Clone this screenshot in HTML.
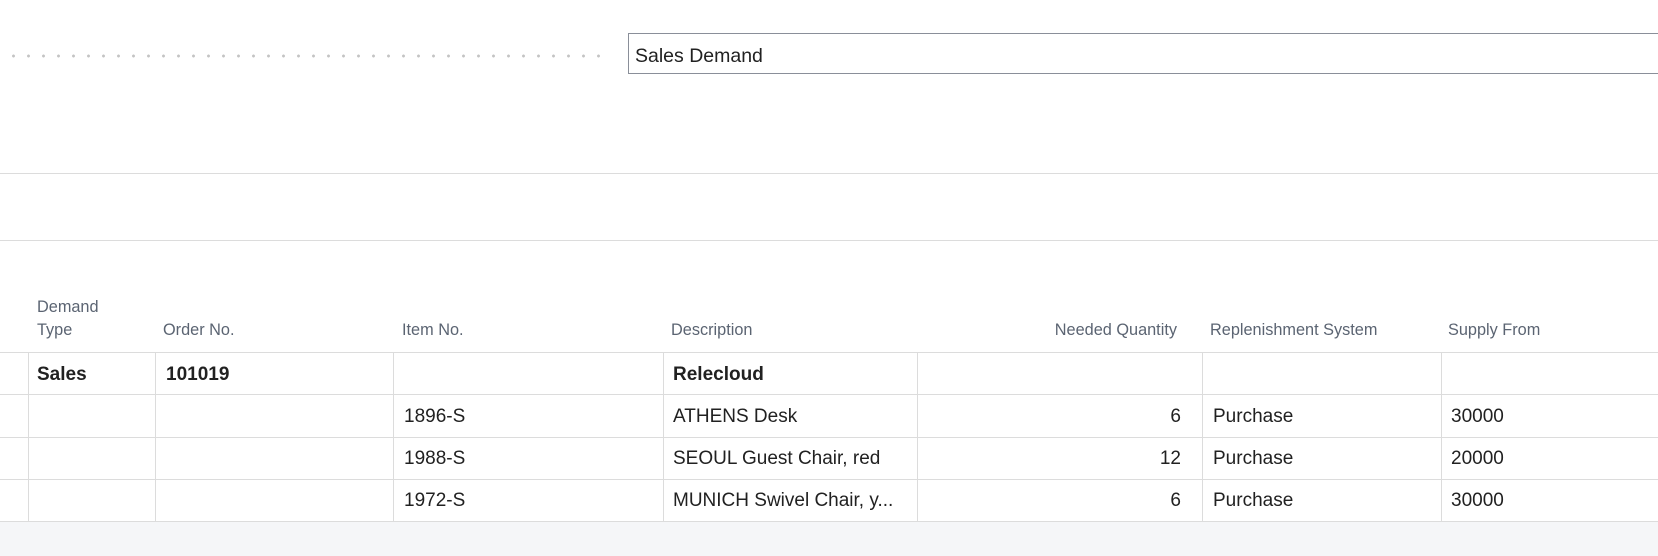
<!DOCTYPE html>
<html><head><meta charset="utf-8"><style>
body{margin:0;width:1658px;height:556px;background:#fff;position:relative;overflow:hidden;font-family:"Liberation Sans",sans-serif;color:#212121}
.abs{position:absolute}
.dots{left:6px;top:54px;width:604px;height:4px;background-image:radial-gradient(circle,#c4c4c4 1.3px,transparent 1.6px);background-size:15px 4px}
.inp{left:628px;top:33px;width:1040px;height:41px;border:1px solid #8a8f99;box-sizing:border-box;font-size:19.5px;line-height:39px;padding-left:6px;padding-top:3px}
.hl{left:0;width:1658px;height:1px;background:#dcdcdc}
.hd{font-size:16.3px;color:#5b6472;line-height:23px}
.vl{width:1px;background:#dcdcdc;top:353px;height:169px}
.t{font-size:19px;line-height:20px}
.b{font-weight:bold}
</style></head><body>
<div class="abs dots"></div>
<div class="abs inp">Sales Demand</div>
<div class="abs hl" style="top:173px"></div>
<div class="abs hl" style="top:240px"></div>
<div class="abs hd" style="left:37px;top:296px">Demand<br>Type</div>
<div class="abs hd" style="left:163px;top:319px">Order No.</div>
<div class="abs hd" style="left:402px;top:319px">Item No.</div>
<div class="abs hd" style="left:671px;top:319px">Description</div>
<div class="abs hd" style="right:481px;top:319px">Needed Quantity</div>
<div class="abs hd" style="left:1210px;top:319px">Replenishment System</div>
<div class="abs hd" style="left:1448px;top:319px">Supply From</div>
<div class="abs hl" style="top:352px"></div>
<div class="abs hl" style="top:394px"></div>
<div class="abs hl" style="top:437px"></div>
<div class="abs hl" style="top:479px"></div>
<div class="abs hl" style="top:521px"></div>
<div class="abs vl" style="left:28px"></div>
<div class="abs vl" style="left:155px"></div>
<div class="abs vl" style="left:393px"></div>
<div class="abs vl" style="left:663px"></div>
<div class="abs vl" style="left:917px"></div>
<div class="abs vl" style="left:1202px"></div>
<div class="abs vl" style="left:1441px"></div>
<div class="abs" style="left:0;top:522px;width:1658px;height:34px;background:#f5f6f8"></div>
<div class="abs t b" style="left:37px;top:365px">Sales</div>
<div class="abs t b" style="left:166px;top:365px">101019</div>
<div class="abs t b" style="left:673px;top:365px">Relecloud</div>
<div class="abs t" style="left:404px;top:407px">1896-S</div>
<div class="abs t" style="left:673px;top:407px">ATHENS Desk</div>
<div class="abs t" style="right:477px;top:407px">6</div>
<div class="abs t" style="left:1213px;top:407px">Purchase</div>
<div class="abs t" style="left:1451px;top:407px">30000</div>
<div class="abs t" style="left:404px;top:449px">1988-S</div>
<div class="abs t" style="left:673px;top:449px">SEOUL Guest Chair, red</div>
<div class="abs t" style="right:477px;top:449px">12</div>
<div class="abs t" style="left:1213px;top:449px">Purchase</div>
<div class="abs t" style="left:1451px;top:449px">20000</div>
<div class="abs t" style="left:404px;top:491px">1972-S</div>
<div class="abs t" style="left:673px;top:491px">MUNICH Swivel Chair, y...</div>
<div class="abs t" style="right:477px;top:491px">6</div>
<div class="abs t" style="left:1213px;top:491px">Purchase</div>
<div class="abs t" style="left:1451px;top:491px">30000</div>
</body></html>
